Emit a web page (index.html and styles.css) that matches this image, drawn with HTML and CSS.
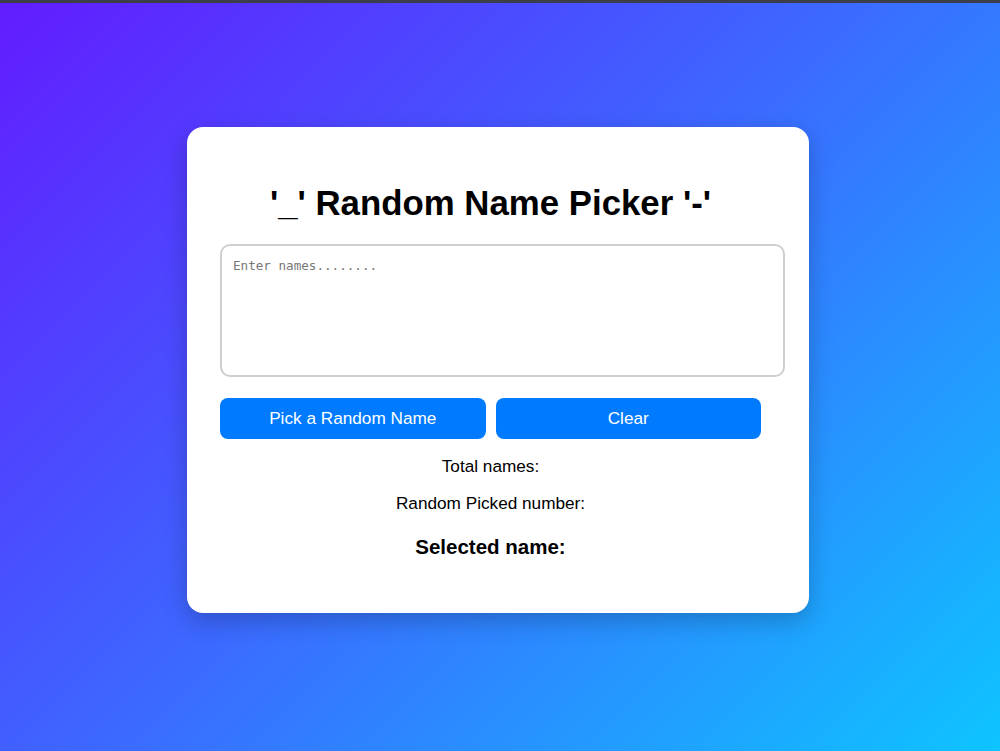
FILE: index.html
```html
<!DOCTYPE html>
<html lang="en">
<head>
    <meta charset="UTF-8">
    <meta name="viewport" content="width=device-width, initial-scale=1.0">
    <title>Random Name Picker</title>
    <link rel="stylesheet" href="styles.css">
</head>
<body>
    <div class="topbar"></div>
    <div class="page">
        <div class="container">
            <h1>'_' Random Name Picker '-'</h1>
            <textarea id="names" placeholder="Enter names........"></textarea>
            <div class="buttons">
                <button id="pickBtn">Pick a Random Name</button>
                <button id="clearBtn">Clear</button>
            </div>
            <p class="info">Total names: <span id="total"></span></p>
            <p class="info">Random Picked number: <span id="number"></span></p>
            <h3 class="selected">Selected name: <span id="selected"></span></h3>
        </div>
    </div>

    <script>
        const namesInput = document.getElementById('names');

        document.getElementById('pickBtn').addEventListener('click', function() {
            const names = namesInput.value.split('\n').map(n => n.trim()).filter(n => n);
            document.getElementById('total').textContent = names.length;
            if (names.length === 0) return;
            const index = Math.floor(Math.random() * names.length);
            document.getElementById('number').textContent = index + 1;
            document.getElementById('selected').textContent = names[index];
        });

        document.getElementById('clearBtn').addEventListener('click', function() {
            namesInput.value = '';
            document.getElementById('total').textContent = '';
            document.getElementById('number').textContent = '';
            document.getElementById('selected').textContent = '';
        });
    </script>
</body>
</html>
```

FILE: styles.css
```css
html, body {
    margin: 0;
    height: 100%;
}
body {
    font-family: "Liberation Sans", Arial, sans-serif;
    font-size: 17.2px;
    background: linear-gradient(135deg, #621cff 0%, #3f63ff 45%, #0ec4ff 100%);
    display: flex;
    flex-direction: column;
}
.topbar {
    height: 3px;
    background-color: #3c3f4a;
}
.page {
    flex: 1;
    display: flex;
    justify-content: center;
    padding: 124px 4px 0 0;
}
.container {
    align-self: flex-start;
    width: 541px;
    padding: 33px 48px 54px 33px;
    background-color: #fff;
    border-radius: 16px;
    box-shadow: 0 8px 24px rgba(0, 0, 0, 0.22);
    text-align: center;
}
h1 {
    font-size: 34.8px;
    line-height: 40px;
    margin: 23px 0 21px;
}
textarea {
    display: block;
    width: 565px;
    height: 133px;
    box-sizing: border-box;
    padding: 12px 11px;
    border: 2px solid #cfcfcf;
    border-radius: 10px;
    font-family: "DejaVu Sans Mono", "Liberation Mono", monospace;
    font-size: 12.6px;
    resize: none;
}
textarea::placeholder {
    color: #777;
}
.buttons {
    display: flex;
    gap: 10px;
    margin-top: 21px;
}
button {
    flex: 1;
    height: 41px;
    border: none;
    border-radius: 8px;
    background-color: #007bff;
    color: #fff;
    font-family: "Liberation Sans", Arial, sans-serif;
    font-size: 17.2px;
    cursor: pointer;
}
button:hover {
    background-color: #0062d6;
}
.info {
    line-height: 19px;
    margin: 18px 0 0;
}
.selected {
    font-size: 20.5px;
    line-height: 24px;
    margin: 22px 0 0;
}
```
